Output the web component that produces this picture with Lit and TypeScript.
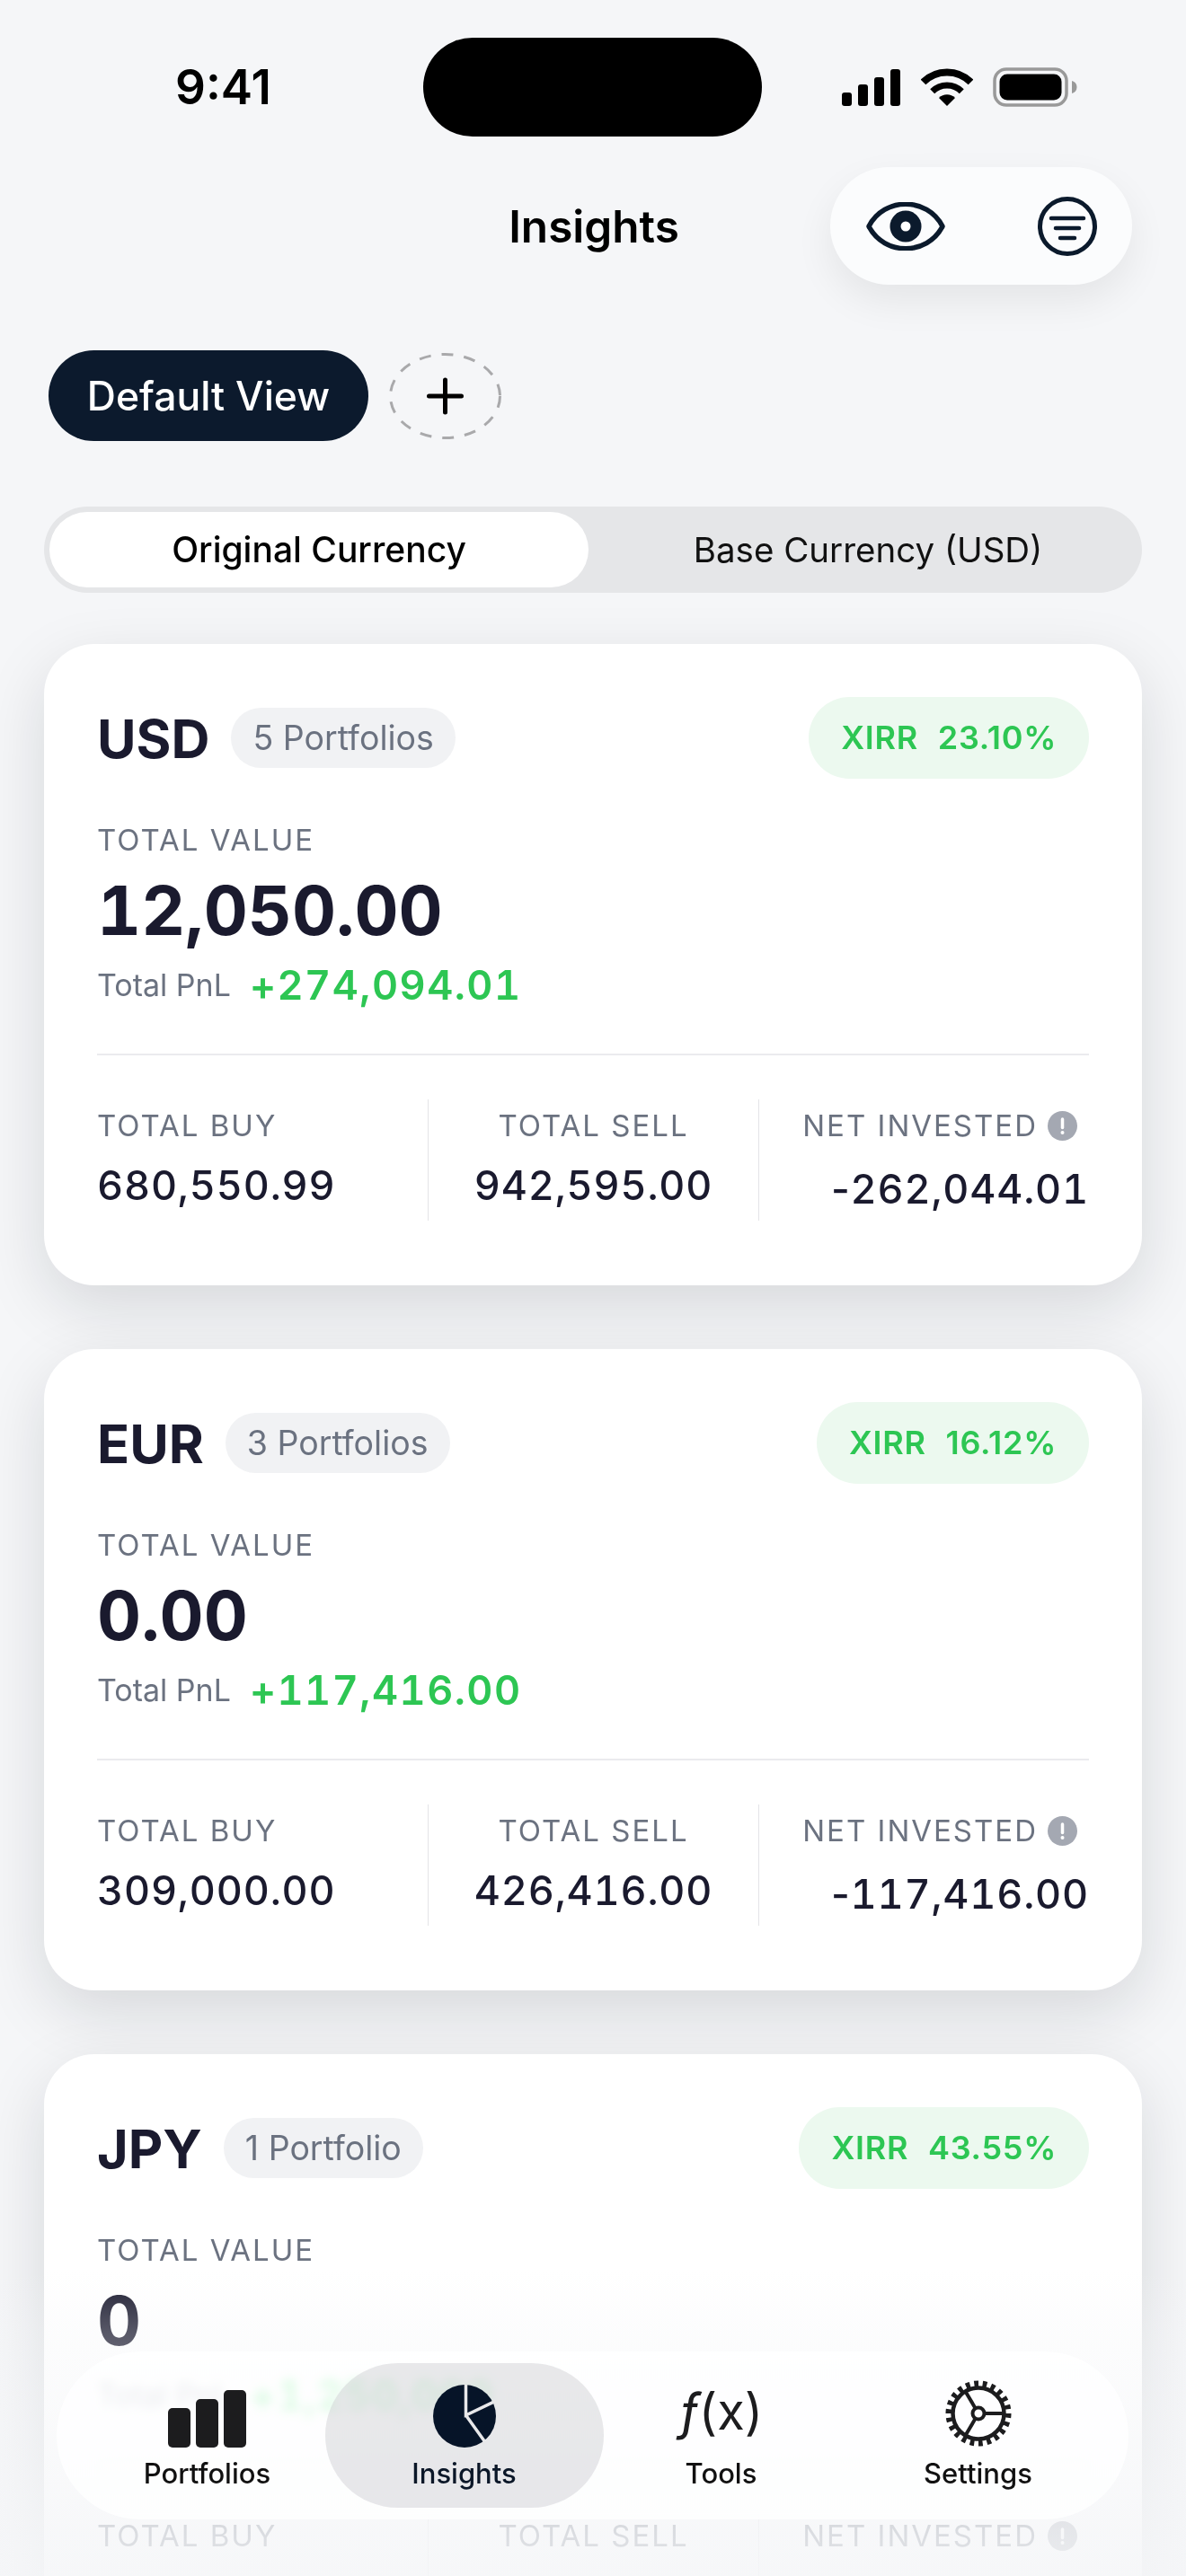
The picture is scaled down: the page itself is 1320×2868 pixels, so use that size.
import { LitElement, html, css } from 'lit';
import { customElement } from 'lit/decorators.js';

interface CurrencyCard {
  code: string;
  portfolios: string;
  xirr: string;
  value: string;
  pnl: string;
  buy: string;
  sell: string;
  net: string;
}

const CARDS: CurrencyCard[] = [
  { code: 'USD', portfolios: '5 Portfolios', xirr: '23.10%', value: '12,050.00', pnl: '+274,094.01', buy: '680,550.99', sell: '942,595.00', net: '262,044.01' },
  { code: 'EUR', portfolios: '3 Portfolios', xirr: '16.12%', value: '0.00', pnl: '+117,416.00', buy: '309,000.00', sell: '426,416.00', net: '117,416.00' },
  { code: 'JPY', portfolios: '1 Portfolio', xirr: '43.55%', value: '0', pnl: '+1,250,000', buy: '2,500,000', sell: '3,750,000', net: '1,250,000' },
];

const NAVY = '#0b1a2c';

const signalIcon = html`<svg width="65" height="41" viewBox="0 0 65 41">
  <rect x="0" y="26" width="11" height="15" rx="3" />
  <rect x="18" y="17" width="11" height="24" rx="3" />
  <rect x="36" y="9" width="11" height="32" rx="3" />
  <rect x="54" y="0" width="11" height="41" rx="3" />
</svg>`;

const wifiIcon = html`<svg width="58" height="42" viewBox="0 0 58 42">
  <path d="M2.5 15.5A37.5 37.5 0 0 1 55.5 15.5" fill="none" stroke="#000" stroke-width="8" />
  <path d="M12.7 25.7A23 23 0 0 1 45.3 25.7" fill="none" stroke="#000" stroke-width="7" />
  <path d="M29 42L20 33A12.7 12.7 0 0 1 38 33Z" />
</svg>`;

const batteryIcon = html`<svg width="94" height="44" viewBox="0 0 94 44">
  <rect x="2" y="2" width="80" height="40" rx="13" fill="none" stroke="#999" stroke-width="3.5" />
  <rect x="7.5" y="7.5" width="69" height="29" rx="8.5" fill="#000" />
  <path d="M88 15c3.5 1 5.500 3.500 5.500 7s-2 6-5.500 7z" fill="#999" />
</svg>`;

const eyeIcon = html`<svg width="88" height="54" viewBox="0 0 88 54">
  <path d="M3 27C20 -6 68 -6 85 27C68 60 20 60 3 27Z" fill="none" stroke="${NAVY}" stroke-width="5.500" stroke-linejoin="round" />
  <circle cx="44" cy="27" r="17.500" fill="${NAVY}" />
  <circle cx="44" cy="27" r="5.500" fill="#fff" />
</svg>`;

const filterIcon = html`<svg width="66" height="66" viewBox="0 0 66 66">
  <circle cx="33" cy="33" r="30.500" fill="none" stroke="${NAVY}" stroke-width="5" />
  <g stroke="${NAVY}" stroke-width="4.500" stroke-linecap="round">
    <path d="M15 24H51" />
    <path d="M20 35H46" />
    <path d="M25 46H41" />
  </g>
</svg>`;

// dashed ellipse with the plus in the middle
const addIcon = html`<svg width="125" height="96" viewBox="0 0 125 96">
  <ellipse cx="62.500" cy="48" rx="61" ry="46.500" fill="none" stroke="#a9a9ab" stroke-width="3" stroke-dasharray="13 12" />
  <path d="M62.500 30V66M44.500 48H80.500" stroke="#000" stroke-width="5" stroke-linecap="round" />
</svg>`;

const infoIcon = html`<svg class="info" width="33" height="33" viewBox="0 0 33 33">
  <circle cx="16.500" cy="16.500" r="16.500" fill="#a4a8b2" />
  <path d="M16.500 9V18.500" stroke="#fff" stroke-width="3.500" stroke-linecap="round" />
  <circle cx="16.500" cy="24" r="2" fill="#fff" />
</svg>`;

const barsIcon = html`<svg width="87" height="64" viewBox="0 0 87 64" fill="#1c1c1e">
  <rect x="0" y="20" width="25" height="44" rx="5" />
  <rect x="31" y="10" width="25" height="54" rx="5" />
  <rect x="62" y="0" width="25" height="64" rx="5" />
</svg>`;

const pieIcon = html`<svg width="70" height="70" viewBox="0 0 70 70">
  <circle cx="35" cy="35" r="35" fill="#061428" />
  <path d="M36.500 -2V34L72 17M36.500 34L58 64" fill="none" stroke="#e8e8ea" stroke-width="3.500" />
</svg>`;

const gearIcon = html`<svg width="76" height="76" viewBox="0 0 76 76" fill="none" stroke="#1c1c1e">
  <circle cx="38" cy="38" r="28.500" stroke-width="4.500" />
  <circle cx="38" cy="38" r="33" stroke-width="7" pathLength="44" stroke-dasharray="1 1" />
  <circle cx="38" cy="38" r="6.500" stroke-width="4" />
  <path d="M44.500 38H66M34.700 32.400L23.500 13.500M34.700 43.600L23.500 62.500" stroke-width="4" />
</svg>`;

@customElement('app-root')
export class AppRoot extends LitElement {
  static styles = css`
    :host {
      display: block;
      position: relative;
      height: 2868px;
      overflow: hidden;
      background: #f5f6f8;
      font-family: Inter, 'Liberation Sans', sans-serif;
      color: #1a1a2e;
    }

    .status {
      display: grid;
      grid-template-columns: 471px 377px 1fr;
      align-items: center;
      padding-top: 42px;
    }

    .time {
      padding-left: 195px;
      font-size: 53px;
      font-weight: 600;
      line-height: 60px;
      color: #000;
    }

    .island {
      height: 110px;
      border-radius: 55px;
      background: #000;
    }

    .status-icons {
      display: flex;
      align-items: center;
      padding-left: 89px;
    }

    .status-icons svg:nth-child(2) {
      margin-left: 23px;
    }

    .status-icons svg:nth-child(3) {
      margin-left: 22px;
    }

    .header {
      display: grid;
      grid-template-columns: 1fr auto 1fr;
      align-items: center;
      margin-top: 34px;
      padding-right: 60px;
    }

    .title {
      grid-column: 2;
      padding-left: 62px;
      font-size: 49.500px;
      font-weight: 600;
      line-height: 60px;
      color: #000;
    }

    .actions {
      grid-column: 3;
      justify-self: end;
      display: flex;
      align-items: center;
      justify-content: space-between;
      box-sizing: border-box;
      width: 336px;
      height: 131px;
      padding: 0 39px 0 40px;
      border-radius: 66px;
      background: #fbfcfd;
      box-shadow: 0 18px 44px rgba(0, 0, 0, 0.07);
    }

    .views {
      display: flex;
      align-items: center;
      gap: 23px;
      margin-top: 73px;
      padding-left: 54px;
    }

    .view {
      display: flex;
      align-items: center;
      justify-content: center;
      width: 356px;
      height: 101px;
      border-radius: 51px;
      background: #0c1a2d;
      color: #fff;
      font-size: 44.500px;
      font-weight: 500;
    }

    .add {
      display: flex;
    }

    .segment {
      display: flex;
      box-sizing: border-box;
      height: 96px;
      margin: 73px 49px 0;
      padding: 6px;
      border-radius: 48px;
      background: #e5e6e8;
      font-size: 38.500px;
      line-height: 84px;
      color: #111;
      text-align: center;
    }

    .segment div {
      flex: 1;
      padding-left: 12px;
    }

    .segment .on {
      flex: none;
      width: 600px;
      padding-left: 0;
      border-radius: 42px;
      background: #fff;
      color: #000;
      font-size: 39px;
      font-weight: 500;
    }

    .cards {
      display: flex;
      flex-direction: column;
      gap: 71px;
      margin: 57px 49px 0;
    }

    .card {
      padding: 59px 59px 72px;
      border-radius: 56px;
      background: #fff;
      box-shadow: 0 24px 70px rgba(15, 20, 30, 0.13);
    }

    .card-head {
      display: flex;
      align-items: center;
      height: 91px;
    }

    .code {
      font-size: 59.500px;
      font-weight: 700;
      line-height: 68px;
    }

    .count {
      margin-left: 24px;
      padding: 0 24px;
      border-radius: 34px;
      background: #f1f2f4;
      color: #6b7280;
      font-size: 37.500px;
      line-height: 67px;
    }

    .xirr {
      display: flex;
      gap: 22px;
      margin-left: auto;
      padding: 0 36px;
      border-radius: 46px;
      background: #ecf9ef;
      color: #2dc653;
      font-size: 36px;
      font-weight: 600;
      line-height: 91px;
      letter-spacing: 0.700px;
    }

    .label {
      font-size: 33px;
      line-height: 40px;
      letter-spacing: 2px;
      color: #6b7280;
    }

    .total {
      margin-top: 48px;
    }

    .value {
      margin-top: 18px;
      font-size: 76px;
      font-weight: 700;
      line-height: 80px;
      font-variant-numeric: tabular-nums;
    }

    .pnl {
      display: flex;
      align-items: center;
      gap: 21px;
      margin-top: 19px;
      line-height: 50px;
    }

    .pnl-label {
      font-size: 34px;
      color: #6b7280;
    }

    .pnl-value {
      font-size: 45px;
      font-weight: 600;
      letter-spacing: 1.500px;
      font-variant-numeric: tabular-nums;
      color: #2dc653;
    }

    .rule {
      height: 2px;
      margin-top: 51px;
      background: #ebebee;
    }

    .stats {
      display: grid;
      grid-template-columns: repeat(3, 1fr);
      height: 135px;
      margin-top: 49px;
    }

    .stat {
      display: flex;
      flex-direction: column;
      padding-top: 9px;
    }

    .stat + .stat {
      border-left: 1px solid #e4e4e7;
    }

    .stat.mid {
      align-items: center;
    }

    .stat.end {
      align-items: flex-end;
    }

    .stat-label {
      display: flex;
      align-items: center;
      gap: 11px;
    }

    .stat.end .stat-label {
      padding-right: 13px;
    }

    .stat-value {
      margin-top: 22px;
      font-size: 45px;
      font-weight: 500;
      line-height: 50px;
      letter-spacing: 0.800px;
      font-variant-numeric: tabular-nums;
    }

    .stat.end .stat-value {
      margin-top: 26px;
    }

    /* tabular-nums makes the minus as wide as a digit */
    .sign {
      font-variant-numeric: normal;
    }

    .fade {
      position: absolute;
      left: 0;
      right: 0;
      bottom: 0;
      height: 340px;
      background: linear-gradient(rgba(245, 246, 248, 0), rgba(245, 246, 248, 0.28) 20%, rgba(245, 246, 248, 0.8) 85%, rgba(245, 246, 248, 0.88));
    }

    .nav {
      position: absolute;
      left: 63px;
      top: 2618px;
      display: grid;
      grid-template-columns: repeat(4, 286px);
      justify-content: center;
      box-sizing: border-box;
      width: 1193px;
      height: 187px;
      padding: 13px 0;
      border-radius: 94px;
      background: rgba(255, 255, 255, 0.76);
      backdrop-filter: blur(6px) saturate(1.7);
      -webkit-backdrop-filter: blur(6px) saturate(1.7);
    }

    .item {
      display: flex;
      flex-direction: column;
      align-items: center;
      font-size: 31px;
      font-weight: 500;
      color: #111;
    }

    .item.active {
      margin: 0 -12px;
      border-radius: 81px;
      background: rgba(200, 200, 205, 0.42);
      color: #0b1728;
    }

    .glyph {
      display: flex;
      align-items: flex-end;
      justify-content: center;
      height: 80px;
      margin-top: 14px;
    }

    .fx {
      align-items: center;
      font-size: 56px;
      font-weight: 400;
      color: #1c1c1e;
    }

    .item-label {
      margin-top: 11px;
      line-height: 36px;
    }
  `;

  renderCard(card: CurrencyCard) {
    return html`
      <section class="card">
        <div class="card-head">
          <span class="code">${card.code}</span>
          <span class="count">${card.portfolios}</span>
          <span class="xirr"><span>XIRR</span><span>${card.xirr}</span></span>
        </div>
        <div class="label total">TOTAL VALUE</div>
        <div class="value">${card.value}</div>
        <div class="pnl">
          <span class="pnl-label">Total PnL</span>
          <span class="pnl-value">${card.pnl}</span>
        </div>
        <div class="rule"></div>
        <div class="stats">
          <div class="stat">
            <div class="label">TOTAL BUY</div>
            <div class="stat-value">${card.buy}</div>
          </div>
          <div class="stat mid">
            <div class="label">TOTAL SELL</div>
            <div class="stat-value">${card.sell}</div>
          </div>
          <div class="stat end">
            <div class="label stat-label">NET INVESTED ${infoIcon}</div>
            <div class="stat-value"><span class="sign">-</span>${card.net}</div>
          </div>
        </div>
      </section>
    `;
  }

  render() {
    return html`
      <div class="status">
        <div class="time">9:41</div>
        <div class="island"></div>
        <div class="status-icons">${signalIcon}${wifiIcon}${batteryIcon}</div>
      </div>

      <header class="header">
        <div class="title">Insights</div>
        <div class="actions">${eyeIcon}${filterIcon}</div>
      </header>

      <div class="views">
        <div class="view">Default View</div>
        <div class="add">${addIcon}</div>
      </div>

      <div class="segment">
        <div class="on">Original Currency</div>
        <div>Base Currency (USD)</div>
      </div>

      <div class="cards">${CARDS.map((card) => this.renderCard(card))}</div>

      <div class="fade"></div>

      <nav class="nav">
        <div class="item">
          <div class="glyph">${barsIcon}</div>
          <div class="item-label">Portfolios</div>
        </div>
        <div class="item active">
          <div class="glyph">${pieIcon}</div>
          <div class="item-label">Insights</div>
        </div>
        <div class="item">
          <div class="glyph fx"><i>ƒ</i>(x)</div>
          <div class="item-label">Tools</div>
        </div>
        <div class="item">
          <div class="glyph">${gearIcon}</div>
          <div class="item-label">Settings</div>
        </div>
      </nav>
    `;
  }
}
